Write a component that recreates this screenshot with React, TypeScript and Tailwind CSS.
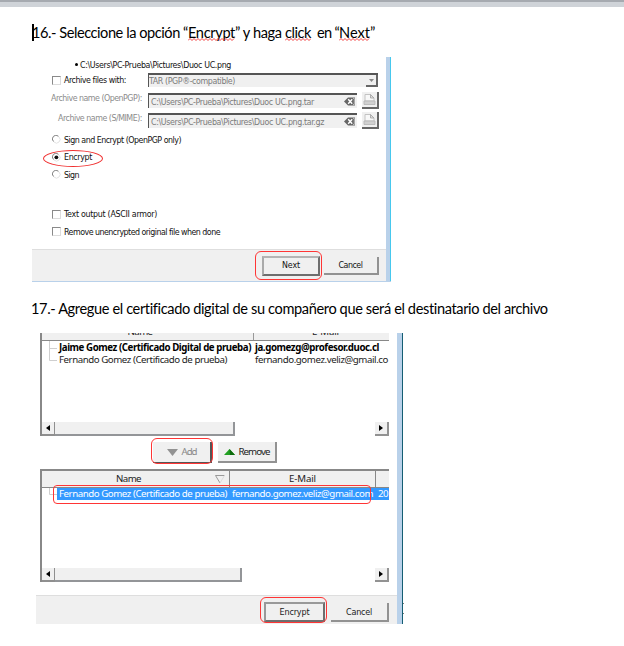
import { useLayoutEffect, useRef, useState } from "react";
import type { ReactNode } from "react";

// A single line of text spaced out (or in) to fill an exact width.
function Line({ w, className = "", children }: { w: number; className?: string; children: string }) {
  const ref = useRef<HTMLSpanElement>(null);
  const [spacing, setSpacing] = useState(0);
  useLayoutEffect(() => {
    if (!ref.current) return;
    const natural = ref.current.getBoundingClientRect().width - spacing * children.length;
    setSpacing((w - natural) / children.length);
  }, [w, children]);
  return (
    <span className={`block shrink-0 ${className}`} style={{ width: w }}>
      <span ref={ref} className="inline-block whitespace-pre" style={{ letterSpacing: spacing }}>
        {children}
      </span>
    </span>
  );
}

function Misspelled({ w, children }: { w: number; children: string }) {
  const steps = Math.floor(w / 2);
  let d = "M0 2.5";
  for (let i = 1; i <= steps; i++) d += ` L${i * 2} ${i % 2 ? 0.5 : 2.5}`;
  return (
    <span className="relative block">
      <Line w={w}>{children}</Line>
      <svg className="absolute left-0 top-[16px] h-[3px] w-full" fill="none" stroke="#f03030" strokeWidth="0.9">
        <path d={d} />
      </svg>
    </span>
  );
}

function Checkbox() {
  return <span className="block size-[9px] shrink-0 border border-[#dcdcdc] border-l-[#8a8a8a] border-t-[#8a8a8a] bg-white" />;
}

function Radio({ on = false }: { on?: boolean }) {
  return (
    <svg className="size-[9px] shrink-0" viewBox="0 0 9 9" fill="none">
      <path d="M1.5 6.5 A3.4 3.4 0 0 1 6.5 1.3" stroke="#7d7d7d" />
      <path d="M7 2 A3.4 3.4 0 0 1 2 7" stroke="#e2e2e2" />
      {on && <circle cx="4.4" cy="4.3" r="1.9" fill="#111" />}
    </svg>
  );
}

function Option({ w, children, radio, on }: { w: number; children: string; radio?: boolean; on?: boolean }) {
  return (
    <div className="flex h-[17.5px] items-center gap-[3px] pl-[20px]">
      {radio ? <Radio on={on} /> : <Checkbox />}
      <Line w={w}>{children}</Line>
    </div>
  );
}

function ArchiveName({ label, labelW, path, pathW }: { label: string; labelW: number; path: string; pathW: number }) {
  return (
    <div className="flex h-[20px] items-center">
      <div className="flex w-[116px] justify-end pr-[6px] text-[#8b8b8b]">
        <Line w={labelW}>{label}</Line>
      </div>
      <div className="mt-[5px] flex h-[15px] w-[209px] items-center justify-between border-l border-t-2 border-[#555] bg-[#f0f0f0] pl-[2px] text-[#7b7b7b]">
        <Line w={pathW}>{path}</Line>
        <svg className="mr-px h-[9px] w-[12px]" viewBox="0 0 12 9">
          <path d="M0 4.5 L4 0.5 H11 V8.5 H4 Z" fill="#666" />
          <path d="M4.2 2.2 L8.2 6.8 M8.2 2.2 L4.2 6.8" stroke="#fff" strokeWidth="1.4" />
          <path d="M9 1.5 H10.3 V7.5 H9" stroke="#ddd" fill="none" strokeWidth="0.7" />
        </svg>
      </div>
      <div className="ml-[5px] mt-[4px] flex size-[17px] items-center justify-center border-b-2 border-r-2 border-[#666] bg-[#f0f0f0]">
        <svg className="h-[13px] w-[13px]" viewBox="0 0 13 13">
          <path d="M2 8 V1.5 H7.5 L11 5 V8 Z" fill="#f8f8f8" stroke="#bdbdbd" strokeWidth="0.9" />
          <path d="M7.5 1.5 V5 H11 Z" fill="#ddd" stroke="#a8a8a8" strokeWidth="0.9" />
          <path d="M1 8 H12 V11.5 H1 Z" fill="#d0d0d0" stroke="#b8b8b8" strokeWidth="0.9" />
        </svg>
      </div>
    </div>
  );
}

function Button({ className, children }: { className: string; children: ReactNode }) {
  return (
    <div className={`flex shrink-0 items-center justify-center bg-[#f0f0f0] ${className}`}>{children}</div>
  );
}

function ScrollBar({ thumb }: { thumb: string }) {
  return (
    <div className="flex h-[14px] items-stretch justify-between">
      <div className="flex">
        <div className="flex w-[13px] items-center justify-center border-b-2 border-r border-[#8f8f8f] bg-[#f0f0f0]">
          <svg className="h-[6px] w-[4px]"><path d="M4 0 V6 L0 3 Z" fill="#000" /></svg>
        </div>
        <div className={`${thumb} border-b-2 border-r-2 border-[#939598] bg-[#f0f0f0]`} />
      </div>
      <div className="flex w-[14px] items-center justify-center border-b-2 border-r-2 border-[#929292] bg-[#f0f0f0]">
        <svg className="h-[6px] w-[4px]"><path d="M0 0 V6 L4 3 Z" fill="#000" /></svg>
      </div>
    </div>
  );
}

function EncryptDialog() {
  return (
    <div className="ml-[32px] flex h-[225px] w-[359px] border-b border-[#b9d1ea] font-['DejaVu_Sans_Condensed','DejaVu_Sans',sans-serif] text-[8.8px] leading-[12px] text-[#111]">
      <div className="relative flex w-[354px] flex-col">
        <div className="flex h-[15px] items-center gap-[2px] pl-[43px]">
          <span className="size-[3px] rounded-full bg-black" />
          <Line w={151}>C:\Users\PC-Prueba\Pictures\Duoc UC.png</Line>
        </div>
        <div className="flex h-[16px] items-center pl-[20px]">
          <Checkbox />
          <Line w={62} className="ml-[3px]">Archive files with:</Line>
          <div className="ml-[22px] flex h-[14px] w-[230px] items-center justify-between border-l border-t-2 border-[#555] bg-[#f0f0f0] text-[#7b7b7b]">
            <Line w={86}>TAR (PGP®-compatible)</Line>
            <div className="flex h-full w-[12px] items-center justify-center border-b-2 border-r-2 border-[#666]">
              <svg className="h-[3px] w-[5px]"><path d="M0 0 H5 L2.5 3 Z" fill="#888" /></svg>
            </div>
          </div>
        </div>
        <ArchiveName label="Archive name (OpenPGP):" labelW={91} path="C:\Users\PC-Prueba\Pictures\Duoc UC.png.tar" pathW={163} />
        <ArchiveName label="Archive name (S/MIME):" labelW={84} path="C:\Users\PC-Prueba\Pictures\Duoc UC.png.tar.gz" pathW={173} />
        <div className="mt-[3px]">
          <Option radio w={117}>Sign and Encrypt (OpenPGP only)</Option>
          <Option radio on w={28}>Encrypt</Option>
          <Option radio w={15}>Sign</Option>
        </div>
        <div className="mt-[22px]">
          <Option w={93}>Text output (ASCII armor)</Option>
          <Option w={156}>Remove unencrypted original file when done</Option>
        </div>
        <div className="mt-auto flex h-[32px] items-center justify-end border-t border-[#dedede] bg-[#f0f0f0] pr-[7px]">
          <Button className="h-[20px] w-[58px] border-2 border-[#6e6e6e] border-l-[#aaa] border-t-[#b4b4b4] pb-px"><Line w={18}>Next</Line></Button>
          <Button className="ml-[4px] h-[18px] w-[55px] border-b-2 border-r-2 border-[#929292]"><Line w={24}>Cancel</Line></Button>
        </div>
        <div className="absolute left-[11px] top-[93px] h-[17px] w-[60px] rounded-[50%] border border-[#f03030]" />
        <div className="absolute left-[223px] top-[194px] h-[29px] w-[67px] rounded-[6px] border border-[#ff3535]" />
      </div>
      <div className="w-[4px] bg-[#b9d1ea]" />
      <div className="w-px bg-[#46c8ee]" />
    </div>
  );
}

function Branches({ rows }: { rows: 1 | 2 }) {
  return (
    <svg className="h-[24px] w-[8px] shrink-0" fill="none" stroke="#cfcfcf">
      <path d={rows === 2 ? "M0.5 0 V19.5 H8 M0.5 7.5 H8" : "M0.5 0 V6.5 H8"} />
    </svg>
  );
}

function CertificateDialog() {
  return (
    <div className="ml-[36px] flex h-[291px] w-[371px] font-['Noto_Sans',sans-serif] text-[9.7px] leading-[12px] text-[#222]">
      <div className="relative flex w-[361px] flex-col">
        <div className="ml-[4px] flex h-[103px] w-[349px] shrink-0 flex-col border-l-2 border-[#888]">
          <div className="flex h-[8px] shrink-0 overflow-hidden border-b border-[#888] bg-[#f0f0f0]">
            <div className="flex w-[212px] justify-center border-r border-[#999] pr-[15px]">
              <Line w={25} className="-mt-[7px]">Name</Line>
            </div>
            <div className="flex flex-1 justify-center pl-[8px]"><Line w={27} className="-mt-[7px]">E-Mail</Line></div>
          </div>
          <div className="flex flex-1 pl-[7px]">
            <Branches rows={2} />
            <div className="ml-[2px] mt-[1px] w-[196px]">
              <Line w={192} className="font-bold text-black">Jaime Gomez (Certificado Digital de prueba)</Line>
              <Line w={168}>Fernando Gomez (Certificado de prueba)</Line>
            </div>
            <div className="mt-[1px]">
              <Line w={124} className="font-bold text-black">ja.gomezg@profesor.duoc.cl</Line>
              <Line w={133}>fernando.gomez.veliz@gmail.co</Line>
            </div>
          </div>
          <ScrollBar thumb="w-[180px]" />
        </div>
        <div className="ml-[117px] mt-[6px] flex h-[21px] shrink-0 gap-[6px]">
          <Button className="w-[59px] gap-[4px] border-b border-r-2 border-[#555] text-[#888]">
            <svg className="h-[7px] w-[11px]"><path d="M0 0 H11 L5.5 7 Z" fill="#929292" /></svg>
            <Line w={15}>Add</Line>
          </Button>
          <Button className="w-[59px] gap-[4px] border-b-2 border-r-2 border-[#929292]">
            <svg className="h-[6px] w-[11px]"><path d="M0 6 L5.5 0 L11 6 Z" fill="#22a022" /><path d="M5.5 0 L11 6 H6 Z" fill="#0d6a0d" /></svg>
            <Line w={31}>Remove</Line>
          </Button>
        </div>
        <div className="ml-[4px] mt-[6px] flex h-[113px] w-[349px] shrink-0 flex-col border-l-2 border-t-2 border-[#888]">
          <div className="flex h-[17px] shrink-0 items-center border-b border-[#888] bg-[#f0f0f0]">
            <div className="flex h-full w-[188px] items-center justify-end border-r border-[#888] pr-[4px]">
              <Line w={25}>Name</Line>
              <svg className="ml-[74px] h-[9px] w-[10px]" fill="none"><path d="M9.5 0.5 H0.5 L5 8" stroke="#999" /><path d="M5 8 L9.5 0.5" stroke="#ddd" /></svg>
            </div>
            <div className="flex h-full flex-1 items-center justify-center"><Line w={27}>E-Mail</Line></div>
            <div className="h-full w-[14px] border-l border-[#888]" />
          </div>
          <div className="flex flex-1 pl-[7px]">
            <Branches rows={1} />
            <div className="flex h-[12px] flex-1 items-center overflow-hidden bg-[#3399ff] pl-[2px] text-white">
              <Line w={168}>Fernando Gomez (Certificado de prueba)</Line>
              <Line w={141} className="ml-[5px]">fernando.gomez.veliz@gmail.com</Line>
              <Line w={10} className="ml-[5px]">20</Line>
            </div>
          </div>
          <ScrollBar thumb="w-[187px]" />
        </div>
        <div className="mt-auto flex h-[29px] items-center justify-end border-t border-[#dedede] bg-[#f0f0f0] pr-[8px] pt-[4px] font-['DejaVu_Sans_Condensed','DejaVu_Sans',sans-serif] text-[9px]">
          <Button className="h-[20px] w-[61px] border-2 border-[#6e6e6e] border-l-[#999] border-t-[#999]"><Line w={30}>Encrypt</Line></Button>
          <Button className="ml-[6px] h-[19px] w-[58px] border-b-2 border-r-2 border-[#929292] pt-px"><Line w={26}>Cancel</Line></Button>
        </div>
        <div className="absolute left-[115px] top-[105px] h-[26px] w-[62px] rounded-[6px] border border-[#ff3535]" />
        <div className="absolute left-[17px] top-[152px] h-[19px] w-[318px] rounded-[4px] border border-[#ff3535]" />
        <div className="absolute left-[224px] top-[264px] h-[26px] w-[67px] rounded-[6px] border border-[#ff3535]" />
      </div>
      <div className="w-[5px] bg-[#b9d1ea]" />
      <div className="w-px bg-[#155e73]" />
      <div className="mb-[10px] mt-auto h-[11px] w-px border-y border-[#777]" />
    </div>
  );
}

export default function App() {
  return (
    <main className="flex h-[646px] w-[624px] flex-col overflow-hidden bg-white font-['Lato',sans-serif] text-[14.6px] text-black">
      <div className="h-[7px] shrink-0 border-t-2 border-[#a6aab0] bg-[#cfd3d8]" />
      <div className="flex h-[50px] shrink-0 items-start pl-[32px] pt-[15px] leading-[21px]">
        <span className="-mr-[2px] mt-[2px] h-[17px] w-[2px] bg-black" />
        <Line w={156}>16.- Seleccione la opción “</Line>
        <Misspelled w={47}>Encrypt</Misspelled>
        <Line w={50}>” y haga </Line>
        <Misspelled w={26}>click</Misspelled>
        <Line w={28}>  en “</Line>
        <Misspelled w={31}>Next</Misspelled>
        <Line w={6}>”</Line>
      </div>
      <EncryptDialog />
      <div className="flex h-[51px] shrink-0 items-start pl-[31px] pt-[16px] leading-[21px]">
        <Line w={517}>17.- Agregue el certificado digital de su compañero que será el destinatario del archivo</Line>
      </div>
      <CertificateDialog />
    </main>
  );
}
